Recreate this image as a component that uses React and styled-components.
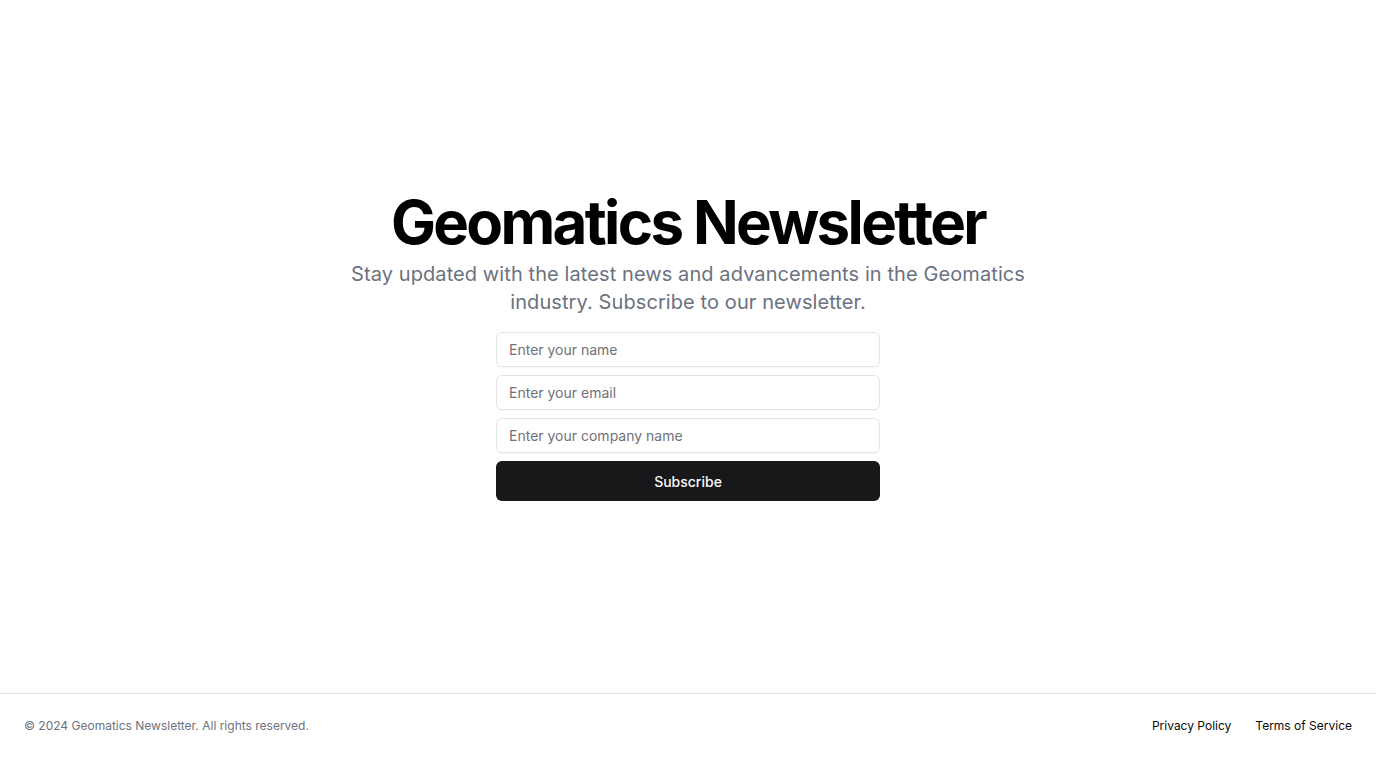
import React from "react";
import styled, { createGlobalStyle } from "styled-components";

const Global = createGlobalStyle`
  * { box-sizing: border-box; }
  html, body { margin: 0; padding: 0; background: #ffffff; }
  body { font-family: Inter, "Liberation Sans", sans-serif; color: #09090b; }
  #root { min-height: 100vh; }
`;

const Page = styled.div`
  display: flex;
  flex-direction: column;
  min-height: 100vh;
`;

const Main = styled.main`
  flex: 1;
  display: flex;
  align-items: center;
  justify-content: center;
  padding: 0 16px;
`;

const Section = styled.section`
  display: flex;
  flex-direction: column;
  align-items: center;
  gap: 16px;
  text-align: center;
`;

const Heading = styled.div`
  display: flex;
  flex-direction: column;
  align-items: center;
  gap: 8px;
`;

const Title = styled.h1`
  margin: 0;
  font-size: 60px;
  line-height: 1;
  font-weight: 700;
  letter-spacing: -2.65px;
  color: #000000;
`;

const Lead = styled.p`
  margin: 0;
  max-width: 700px;
  font-size: 20px;
  line-height: 28px;
  letter-spacing: 0.09px;
  color: #6b7280;
`;

const Form = styled.form`
  width: 384px;
  display: flex;
  flex-direction: column;
  gap: 8px;
`;

const Input = styled.input`
  height: 35px;
  width: 100%;
  border: 1px solid #e4e4e7;
  border-radius: 6px;
  padding: 0 12px;
  font-family: inherit;
  font-size: 14px;
  color: #09090b;
  background: transparent;
  box-shadow: 0 1px 2px rgba(0, 0, 0, 0.04);
  outline: none;
  &::placeholder { color: #71717a; }
`;

const Button = styled.button`
  height: 40px;
  width: 100%;
  border: none;
  border-radius: 6px;
  background: #18181b;
  color: #fafafa;
  font-family: inherit;
  font-size: 14px;
  font-weight: 500;
  cursor: pointer;
`;

const Footer = styled.footer`
  display: flex;
  align-items: center;
  justify-content: space-between;
  padding: 24px;
  border-top: 1px solid #e4e4e7;
  font-size: 12px;
  line-height: 16px;
`;

const Copy = styled.p`
  margin: 0;
  color: #6b7280;
`;

const Nav = styled.nav`
  display: flex;
  gap: 24px;
`;

const Link = styled.a`
  color: #09090b;
  text-decoration: none;
`;

export default function App() {
  return (
    <>
      <Global />
      <Page>
        <Main>
          <Section>
            <Heading>
              <Title>Geomatics Newsletter</Title>
              <Lead>
                Stay updated with the latest news and advancements in the
                Geomatics industry. Subscribe to our newsletter.
              </Lead>
            </Heading>
            <Form onSubmit={(e) => e.preventDefault()}>
              <Input placeholder="Enter your name" type="text" />
              <Input placeholder="Enter your email" type="email" />
              <Input placeholder="Enter your company name" type="text" />
              <Button type="submit">Subscribe</Button>
            </Form>
          </Section>
        </Main>
        <Footer>
          <Copy>© 2024 Geomatics Newsletter. All rights reserved.</Copy>
          <Nav>
            <Link href="#">Privacy Policy</Link>
            <Link href="#">Terms of Service</Link>
          </Nav>
        </Footer>
      </Page>
    </>
  );
}
